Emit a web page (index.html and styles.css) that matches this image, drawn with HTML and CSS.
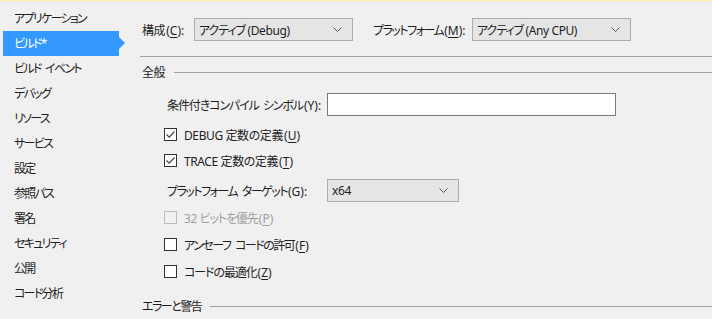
FILE: index.html
```html
<!DOCTYPE html>
<html>
<head>
    <title>プロジェクトのプロパティ</title>
    <link rel="stylesheet" href="styles.css">
</head>
<body>
    <div class="window">
        <ul class="nav">
            <li>アプリケーション</li>
            <li class="active">ビルド*</li>
            <li>ビルド イベント</li>
            <li>デバッグ</li>
            <li>リソース</li>
            <li>サービス</li>
            <li>設定</li>
            <li>参照パス</li>
            <li>署名</li>
            <li>セキュリティ</li>
            <li>公開</li>
            <li>コード分析</li>
        </ul>

        <div class="page">
            <div class="top-row">
                <span class="label config-label">構成<span class="key">(<u>C</u>):</span></span>
                <div class="select config">
                    <span><span class="tight">アクティブ</span> (Debug)</span>
                    <svg width="9" height="5" viewBox="0 0 9 5"><polyline points="0.5,0.5 4.5,4.5 8.5,0.5" fill="none" stroke="#555" stroke-width="1"/></svg>
                </div>
                <span class="label platform-label"><span class="tighter">プラットフォーム</span><span class="key">(<u>M</u>):</span></span>
                <div class="select config">
                    <span><span class="tight">アクティブ</span> (Any CPU)</span>
                    <svg width="9" height="5" viewBox="0 0 9 5"><polyline points="0.5,0.5 4.5,4.5 8.5,0.5" fill="none" stroke="#555" stroke-width="1"/></svg>
                </div>
            </div>
            <div class="rule"></div>

            <div class="group-title"><span>全般</span><div class="line"></div></div>

            <div class="field symbols">
                <span class="field-label"><span class="tight">条件付きコンパイル シンボル</span><span class="key">(Y):</span></span>
                <div class="textbox"></div>
            </div>

            <div class="check debug">
                <span class="box checked"><svg width="11" height="11" viewBox="0 0 11 11"><polyline points="1.5,5.5 4.2,8.2 9.5,2.5" fill="none" stroke="#444" stroke-width="1.2"/></svg></span>
                <span>DEBUG 定数の定義<span class="key">(<u>U</u>)</span></span>
            </div>
            <div class="check trace">
                <span class="box checked"><svg width="11" height="11" viewBox="0 0 11 11"><polyline points="1.5,5.5 4.2,8.2 9.5,2.5" fill="none" stroke="#444" stroke-width="1.2"/></svg></span>
                <span>TRACE 定数の定義<span class="key">(<u>T</u>)</span></span>
            </div>

            <div class="field target">
                <span class="field-label"><span class="tighter">プラットフォーム ターゲット</span><span class="key">(G):</span></span>
                <div class="select small">
                    <span>x64</span>
                    <svg width="9" height="5" viewBox="0 0 9 5"><polyline points="0.5,0.5 4.5,4.5 8.5,0.5" fill="none" stroke="#555" stroke-width="1"/></svg>
                </div>
            </div>

            <div class="check prefer32 disabled">
                <span class="box"></span>
                <span>32 <span class="tight">ビットを優先</span><span class="key">(<u>P</u>)</span></span>
            </div>
            <div class="check unsafe">
                <span class="box"></span>
                <span><span class="tighter">アンセーフ コードの許可</span><span class="key">(<u>F</u>)</span></span>
            </div>
            <div class="check optimize">
                <span class="box"></span>
                <span><span class="tight">コードの最適化</span><span class="key">(<u>Z</u>)</span></span>
            </div>

            <div class="group-title errors"><span class="tighter">エラーと警告</span><div class="line"></div></div>
        </div>
    </div>
</body>
</html>
```

FILE: styles.css
```css
body {
    margin: 0;
    background-color: #f0f0f0;
    border-top: 1px solid #ffeea8;
    font-family: "Noto Sans", "Noto Sans CJK JP", sans-serif;
    font-size: 12px;
    font-feature-settings: "palt";
    color: #1e1e1e;
    overflow: hidden;
    height: 318px;
    white-space: nowrap;
}
u {
    text-decoration-thickness: 1px;
    text-underline-offset: 2px;
}
.window {
    display: flex;
}
.nav {
    list-style: none;
    margin: 5px 0 0 3px;
    padding: 0;
    width: 116px;
    flex: none;
    letter-spacing: -1.7px;
    word-spacing: 3px;
}
.nav li {
    height: 25px;
    line-height: 25px;
    padding-left: 11px;
    position: relative;
}
.nav li.active {
    background-color: #3399ff;
    color: white;
}
.nav li.active::after {
    content: "";
    position: absolute;
    right: -6px;
    top: 6px;
    border-top: 6px solid transparent;
    border-bottom: 6px solid transparent;
    border-left: 6px solid #3399ff;
}
.page {
    flex: 1;
    padding: 17px 0 0 21px;
    letter-spacing: -0.4px;
}
.tight {
    letter-spacing: -1.1px;
    word-spacing: 2px;
}
.tighter {
    letter-spacing: -1.5px;
    word-spacing: 3px;
}
.key {
    letter-spacing: 0;
    margin-left: 1px;
}
.top-row {
    display: flex;
    align-items: center;
    height: 23px;
    padding-left: 2px;
}
.label {
    flex: none;
}
.config-label {
    width: 52px;
}
.platform-label {
    margin-left: 20px;
    width: 99px;
}
.select {
    flex: none;
    height: 21px;
    border: 1px solid #adadad;
    background-color: #e5e5e5;
    display: flex;
    align-items: center;
    justify-content: space-between;
    padding: 0 10px 0 4px;
    box-sizing: content-box;
}
.select.config {
    width: 143px;
}
.select.small {
    width: 116px;
}
.rule {
    margin-top: 15px;
    height: 1px;
    background-color: #a0a0a0;
}
.group-title {
    display: flex;
    align-items: center;
    height: 16px;
    margin-top: 7px;
    padding-left: 2px;
}
.group-title .line {
    flex: 1;
    height: 1px;
    background-color: #a0a0a0;
    margin-left: 9px;
}
.field {
    display: flex;
    align-items: center;
    padding-left: 27px;
}
.field-label {
    flex: none;
    width: 160px;
}
.symbols {
    margin-top: 13px;
}
.textbox {
    flex: none;
    width: 287px;
    height: 21px;
    background-color: white;
    border: 1px solid #7a7a7a;
}
.target {
    margin-top: 12px;
}
.check {
    display: flex;
    align-items: center;
    height: 13px;
    padding-left: 24px;
}
.box {
    flex: none;
    width: 11px;
    height: 11px;
    border: 1px solid #333;
    background-color: white;
    margin-right: 7px;
    display: flex;
}
.debug {
    margin-top: 12px;
}
.trace {
    margin-top: 13px;
}
.prefer32 {
    margin-top: 9px;
}
.unsafe, .optimize {
    margin-top: 14px;
}
.disabled {
    color: #a0a0a0;
}
.disabled .box {
    border-color: #bcbcbc;
    background-color: #f0f0f0;
}
.errors {
    margin-top: 20px;
}
```
